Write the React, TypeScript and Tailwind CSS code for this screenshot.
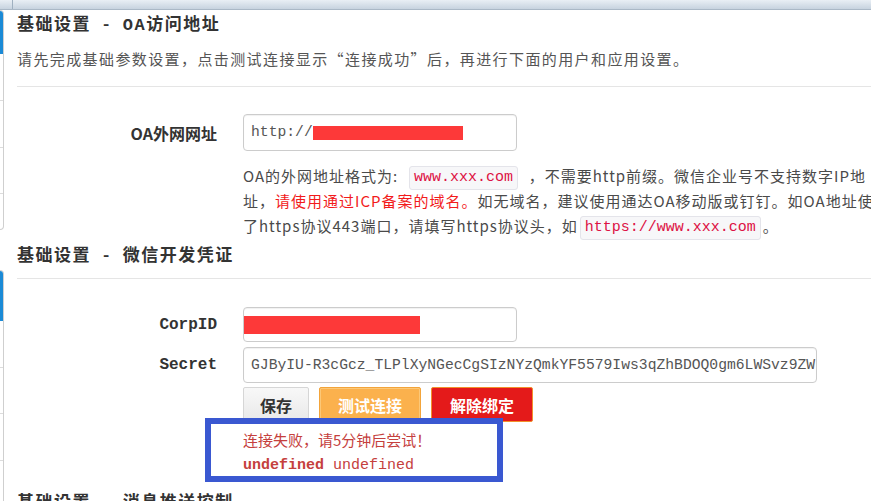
import React from "react";

const cjk = "font-['Noto_Sans_CJK_SC',sans-serif]";
const mono = "font-['Liberation_Mono','Noto_Sans_CJK_SC',monospace]";

function SidePanel({ height, blue, rows }: { height: string; blue: string; rows: string[] }) {
  return (
    <div className={`${height} w-[4px] rounded-r-[4px] border border-l-0 border-[#cfcfcf] overflow-hidden flex flex-col`}>
      <div className={`${blue} bg-[#1b8ad6] shrink-0`} />
      {rows.map((h, i) => (
        <div key={i} className={`${h} border-b border-[#dcdcdc] shrink-0`} />
      ))}
    </div>
  );
}

function Code({ children }: { children: React.ReactNode }) {
  return (
    <span className="inline-flex items-center h-[24px] px-[4px] mx-[2px] rounded-[3px] border border-[#e4e4ea] bg-[#f7f7f9] text-[#d14] font-['Liberation_Mono',monospace] text-[15px] leading-none tracking-normal align-middle">
      {children}
    </span>
  );
}

function Heading({ lead, tail }: { lead: React.ReactNode; tail: React.ReactNode }) {
  return (
    <h2 className={`${cjk} h-[26px] text-[17px] tracking-[1.5px] font-bold leading-[26px] text-[#333] whitespace-nowrap`}>
      基础设置<span className="mx-[12px]">-</span>
      {lead}
      {tail}
    </h2>
  );
}

export default function App() {
  return (
    <div className="w-[871px] h-[501px] overflow-hidden bg-white">
      {/* top strip */}
      <div className="h-[10px] flex bg-gradient-to-b from-[#e9eff5] to-[#c7d3df] border-b border-[#aab8c6]">
        <div className="w-[13px] border-r border-[#9fb0c0]" />
      </div>

      <div className="flex">
        {/* left nav sliver */}
        <aside className="w-[4px] shrink-0 flex flex-col">
          <SidePanel height="h-[220px]" blue="h-[43px]" rows={["h-[47px]", "h-[47px]", "h-[46px]"]} />
          <div className="h-[40px]" />
          <SidePanel height="h-[260px]" blue="h-[50px]" rows={["h-[47px]", "h-[46px]", "h-[47px]"]} />
        </aside>

        <main className="flex-1 min-w-0 pl-[13px]">
          <Heading lead={<span className="font-['Liberation_Mono',monospace] leading-none">OA</span>} tail="访问地址" />
          <p className={`${cjk} mt-[11px] h-[24px] text-[15px] tracking-[1.4px] leading-[24px] text-[#555] whitespace-nowrap`}>
            请先完成基础参数设置，点击测试连接显示“连接成功”后，再进行下面的用户和应用设置。
          </p>
          <div className="mt-[15px] border-t border-[#e5e5e5]" />

          {/* OA url */}
          <div className="mt-[27px] flex items-center">
            <label className={`${cjk} w-[200px] text-right text-[16px] font-bold text-[#333]`}>OA外网网址</label>
            <div className="ml-[26px] w-[274px] h-[37px] rounded-[4px] border border-[#cccccc] shadow-[inset_0_1px_1px_rgba(0,0,0,0.06)] flex items-center pl-[7px] overflow-hidden">
              <span className={`${mono} text-[14.7px] text-[#555]`}>http://</span>
              <span className="inline-block w-[150px] h-[14px] bg-[#fd3939]" />
            </div>
          </div>

          <div className={`${cjk} mt-[12px] ml-[226px] text-[15px] tracking-[1px] leading-[25px] text-[#4a4a4a] whitespace-nowrap`}>
            <div className="h-[25px]">
              OA的外网地址格式为:&nbsp;&nbsp;<Code>www.xxx.com</Code>&nbsp;&nbsp;，不需要http前缀。微信企业号不支持数字IP地
            </div>
            <div className="h-[25px]">
              址，<span className="text-[#f21b1b]">请使用通过ICP备案的域名。</span>如无域名，建议使用通达OA移动版或钉钉。如OA地址使
            </div>
            <div className="h-[25px]">
              了https协议443端口，请填写https协议头，如<Code>https://www.xxx.com</Code>。
            </div>
          </div>

          <div className="mt-[3px]">
            <Heading lead="" tail="微信开发凭证" />
          </div>
          <div className="mt-[11px] border-t border-[#e5e5e5]" />

          {/* CorpID */}
          <div className="mt-[28px] flex items-center">
            <label className={`${mono} w-[200px] text-right text-[16px] font-bold text-[#333]`}>CorpID</label>
            <div className="ml-[26px] w-[274px] h-[35px] rounded-[4px] border border-[#cccccc] shadow-[inset_0_1px_1px_rgba(0,0,0,0.06)] flex items-center overflow-hidden">
              <span className="inline-block w-[176px] h-[18px] bg-[#fd3939]" />
            </div>
          </div>

          {/* Secret */}
          <div className="mt-[5px] flex items-center">
            <label className={`${mono} w-[200px] text-right text-[16px] font-bold text-[#333]`}>Secret</label>
            <div className="ml-[26px] w-[574px] h-[36px] rounded-[4px] border border-[#cccccc] shadow-[inset_0_1px_1px_rgba(0,0,0,0.06)] flex items-center pl-[7px] overflow-hidden">
              <span className={`${mono} text-[14.7px] text-[#555] whitespace-nowrap`}>
                GJByIU-R3cGcz_TLPlXyNGecCgSIzNYzQmkYF5579Iws3qZhBDOQ0gm6LWSvz9ZW
              </span>
            </div>
          </div>

          {/* buttons */}
          <div className="mt-[4px] ml-[226px] flex gap-[10px]">
            <button className={`${cjk} w-[66px] h-[35px] rounded-[2px] border border-[#d6d6d6] bg-gradient-to-b from-[#f8f8f8] to-[#e9e9e9] text-[16px] font-bold text-[#333]`}>
              保存
            </button>
            <button className={`${cjk} w-[102px] h-[35px] rounded-[2px] border border-[#f3a43a] bg-[#fbb14d] shadow-[inset_0_0_0_1px_#fcc878] text-[16px] font-bold text-white`}>
              测试连接
            </button>
            <button className={`${cjk} w-[102px] h-[35px] rounded-[2px] border border-[#f2902c] bg-[#e41a1a] text-[16px] font-bold text-white`}>
              解除绑定
            </button>
          </div>

          {/* result message with annotation frame */}
          <div className="relative mt-[5px] ml-[226px] text-[#c5403d]">
            <div className="absolute left-[-38px] top-[-9px] w-[298px] h-[64px] border-[6px] border-[#3a58d1] pointer-events-none" />
            <div className={`${cjk} h-[26px] text-[15px] leading-[26px] whitespace-nowrap`}>连接失败，请5分钟后尝试！</div>
            <div className={`${mono} h-[26px] text-[15px] leading-[26px] whitespace-nowrap`}>
              <span className="font-bold">undefined</span> undefined
            </div>
          </div>

          <div className="mt-[9px]">
            <Heading lead="" tail="消息推送控制" />
          </div>
        </main>
      </div>
    </div>
  );
}
